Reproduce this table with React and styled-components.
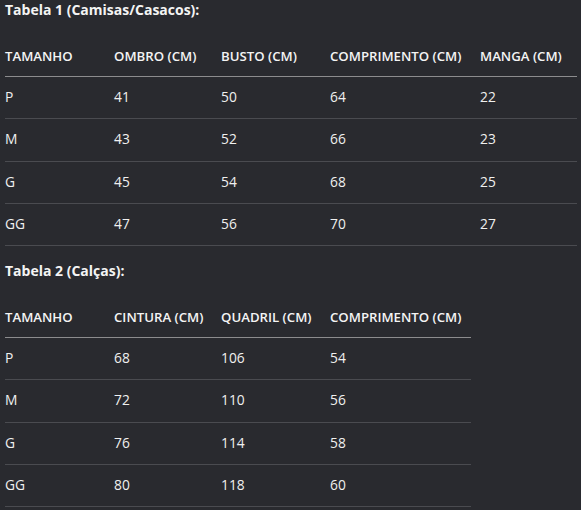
import React from "react";
import styled, { createGlobalStyle } from "styled-components";

const Global = createGlobalStyle`
  html, body { margin: 0; padding: 0; background: #292a2f; }
  body { font-family: "Segoe UI", "Open Sans", "Noto Sans", sans-serif; color: #ececec; }
`;

const Page = styled.div`
  padding: 0 4px 0 5px;
`;

const Title = styled.h3`
  margin: ${(p) => (p.$first ? "0" : "15px")} 0 16px;
  font-size: 14px;
  line-height: 20px;
  font-weight: 700;
  color: #f4f4f4;
`;

const Table = styled.table`
  border-collapse: collapse;
  table-layout: fixed;
  width: ${(p) => p.$width}px;
`;

const Th = styled.th`
  text-align: left;
  font-weight: 600;
  font-size: 13.2px;
  padding: 10px 0;
  line-height: 20px;
  border-bottom: 1px solid #8c8c8e;
  white-space: nowrap;
  color: #f4f4f4;
`;

const Td = styled.td`
  padding: 10px 0 11px;
  font-size: 13.8px;
  line-height: 20.25px;
  border-bottom: 1px solid #4a4b50;
  color: #f0f0f0;
`;

const tables = [
  {
    title: "Tabela 1 (Camisas/Casacos):",
    width: 572,
    cols: [109, 107, 109, 150, 97],
    head: ["TAMANHO", "OMBRO (CM)", "BUSTO (CM)", "COMPRIMENTO (CM)", "MANGA (CM)"],
    rows: [
      ["P", "41", "50", "64", "22"],
      ["M", "43", "52", "66", "23"],
      ["G", "45", "54", "68", "25"],
      ["GG", "47", "56", "70", "27"],
    ],
  },
  {
    title: "Tabela 2 (Calças):",
    width: 466,
    cols: [109, 107, 109, 141],
    head: ["TAMANHO", "CINTURA (CM)", "QUADRIL (CM)", "COMPRIMENTO (CM)"],
    rows: [
      ["P", "68", "106", "54"],
      ["M", "72", "110", "56"],
      ["G", "76", "114", "58"],
      ["GG", "80", "118", "60"],
    ],
  },
];

export default function App() {
  return (
    <Page>
      <Global />
      {tables.map((t, i) => (
        <React.Fragment key={t.title}>
          <Title $first={i === 0}>{t.title}</Title>
          <Table $width={t.width}>
            <colgroup>
              {t.cols.map((w, j) => (
                <col key={j} style={{ width: w }} />
              ))}
            </colgroup>
            <thead>
              <tr>
                {t.head.map((h) => (
                  <Th key={h}>{h}</Th>
                ))}
              </tr>
            </thead>
            <tbody>
              {t.rows.map((r) => (
                <tr key={r[0]}>
                  {r.map((c, j) => (
                    <Td key={j}>{c}</Td>
                  ))}
                </tr>
              ))}
            </tbody>
          </Table>
        </React.Fragment>
      ))}
    </Page>
  );
}
